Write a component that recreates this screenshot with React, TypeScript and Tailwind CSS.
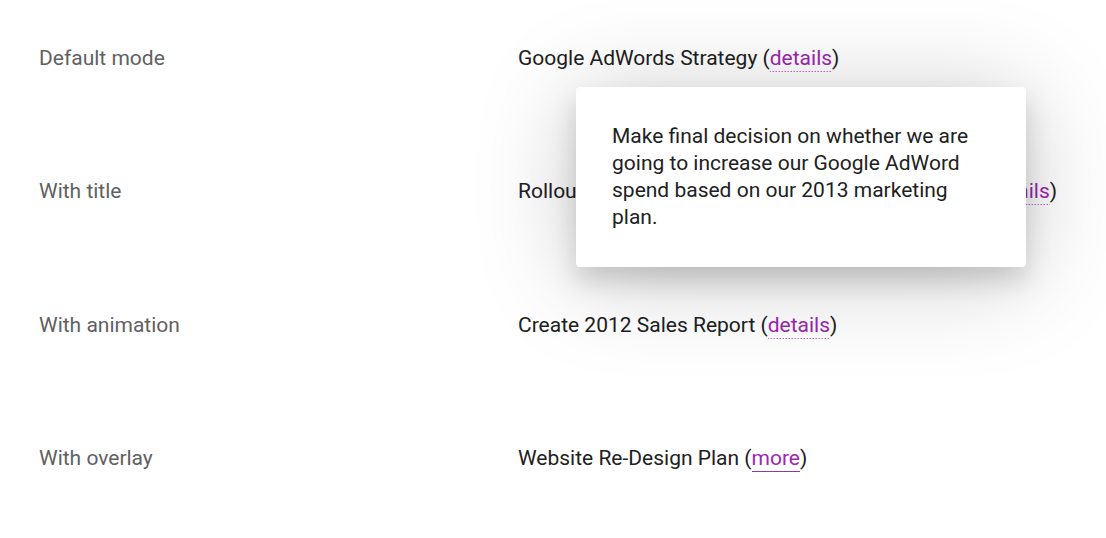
import React from "react";

interface Row {
  label: string;
  title: string;
  link: string;
  solid?: boolean;
}

const rows: Row[] = [
  { label: "Default mode", title: "Google AdWords Strategy", link: "details" },
  { label: "With title", title: "Rollout of New Website and Marketing Campaign", link: "details" },
  { label: "With animation", title: "Create 2012 Sales Report", link: "details" },
  { label: "With overlay", title: "Website Re-Design Plan", link: "more", solid: true },
];

export default function App() {
  return (
    <div
      className="relative w-[1106px] h-[538px] bg-white overflow-hidden"
      style={{ fontFamily: "Roboto, 'Noto Sans', sans-serif" }}
    >
      <div className="pt-[45px] pl-[39px]">
        {rows.map((row) => (
          <div key={row.label} className="grid grid-cols-[479px_1fr] h-[133.3px] text-[21px] leading-[27px]">
            <div className="text-[#616161]">{row.label}</div>
            <div className="text-[#212121] whitespace-nowrap">
              {row.title} (
              {row.solid ? (
                <span className="text-[#9c27b0] pb-[1px] border-b border-[#8e3a9e]">{row.link}</span>
              ) : (
                <span className="text-[#9c27b0] pb-[2px] bg-[linear-gradient(to_right,#9c27b0_34%,transparent_34%)] bg-[length:3px_1px] bg-repeat-x bg-bottom">
                  {row.link}
                </span>
              )}
              )
            </div>
          </div>
        ))}
      </div>

      <div className="absolute left-[576px] top-[87px] w-[450px] bg-white rounded-[4px] p-9 text-[21px] leading-[27px] text-[#212121] shadow-[0_10px_100px_rgba(0,0,0,0.22),0_14px_26px_rgba(0,0,0,0.15)]">
        Make final decision on whether we are going to increase our Google AdWord spend based on our 2013
        marketing plan.
      </div>
    </div>
  );
}
